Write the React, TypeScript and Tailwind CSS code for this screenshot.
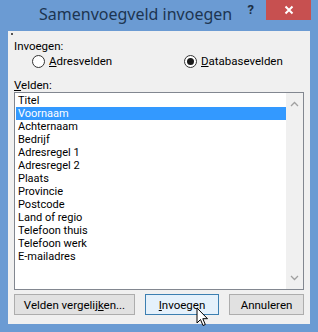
import React from 'react';

const fields = [
  'Titel',
  'Voornaam',
  'Achternaam',
  'Bedrijf',
  'Adresregel 1',
  'Adresregel 2',
  'Plaats',
  'Provincie',
  'Postcode',
  'Land of regio',
  'Telefoon thuis',
  'Telefoon werk',
  'E-mailadres',
];

function Radio({ checked }: { checked?: boolean }) {
  return (
    <span className="w-[13px] h-[13px] rounded-full border border-[#333] bg-white flex items-center justify-center">
      {checked && <span className="w-[7px] h-[7px] rounded-full bg-[#1a1a1a]" />}
    </span>
  );
}

export default function App() {
  return (
    <div
      className="relative w-[318px] h-[332px] bg-[#6b9bd3] flex flex-col text-[#000] overflow-hidden"
      style={{ fontFamily: 'Roboto, "Noto Sans", sans-serif' }}
    >
      {/* title bar */}
      <div className="h-[31px] flex items-start shrink-0">
        <span
          className="ml-[39px] mt-[4px] text-[16px] leading-[20px] text-[#1d3551]"
          style={{ fontFamily: '"Noto Sans", sans-serif' }}
        >
          Samenvoegveld invoegen
        </span>
        <span className="ml-auto mt-[1px] text-[13px] leading-[18px] font-bold text-[#1d2f44]">?</span>
        <div className="ml-[12px] mr-[7px] w-[45px] h-[20px] bg-[#c75050] flex items-center justify-center">
          <svg width="10" height="10" viewBox="0 0 10 10">
            <path d="M1.5 1.5 L8.5 8.5 M8.5 1.5 L1.5 8.5" stroke="#fff" strokeWidth="2" />
          </svg>
        </div>
      </div>

      {/* client area */}
      <div className="mx-[8px] mb-[8px] flex-1 bg-[#f0f0f0] flex flex-col px-[6px] text-[11.5px]">
        <div className="h-[2px] w-[2px] bg-[#555] mt-[2px] -ml-[3px]" />
        <div className="mt-[4px] leading-[15px]">Invoegen:</div>
        <div className="flex items-center h-[15px]">
          <div className="ml-[18px] flex items-center gap-[4px] w-[152px]">
            <Radio />
            <span className="leading-[15px]"><u>A</u>dresvelden</span>
          </div>
          <div className="flex items-center gap-[4px]">
            <Radio checked />
            <span className="leading-[15px]"><u>D</u>atabasevelden</span>
          </div>
        </div>
        <div className="mt-[9px] leading-[14px]"><u>V</u>elden:</div>

        {/* listbox */}
        <div className="h-[198px] border border-[#828790] bg-white flex">
          <div className="flex-1 pt-[1px] pl-[1px] text-[11px]">
            {fields.map((f) => (
              <div
                key={f}
                className={
                  'h-[13px] leading-[13px] pl-[2px] ' +
                  (f === 'Voornaam' ? 'bg-[#3399ff] text-white' : '')
                }
              >
                {f}
              </div>
            ))}
          </div>
          <div className="w-[17px] bg-[#f0f0f0] flex flex-col items-center justify-between py-[8px]">
            <svg width="9" height="6" viewBox="0 0 9 6">
              <path d="M1 5 L4.5 1.5 L8 5" stroke="#a0a0a0" strokeWidth="1.3" fill="none" />
            </svg>
            <svg width="9" height="6" viewBox="0 0 9 6">
              <path d="M1 1 L4.5 4.5 L8 1" stroke="#a0a0a0" strokeWidth="1.3" fill="none" />
            </svg>
          </div>
        </div>

        {/* buttons */}
        <div className="mt-[4px] flex items-center">
          <button className="w-[121px] h-[21px] border border-[#adadad] bg-[#e1e1e1] leading-[18px]">
            Velden vergelij<u>k</u>en...
          </button>
          <button className="ml-[10px] w-[74px] h-[21px] border border-[#3c7fb1] bg-[#e5f1fb] leading-[18px]">
            <u>I</u>nvoegen
          </button>
          <button className="ml-[10px] w-[75px] h-[21px] border border-[#adadad] bg-[#e1e1e1] leading-[18px]">
            Annuleren
          </button>
        </div>
      </div>

      {/* mouse cursor */}
      <svg className="absolute left-[196px] top-[307px]" width="13" height="20" viewBox="0 0 13 20">
        <path d="M1 1 L1 16 L4.5 12.5 L7 18.5 L9.3 17.5 L6.8 11.7 L11.5 11.7 Z" fill="#fff" stroke="#000" strokeWidth="1" strokeLinejoin="round" />
      </svg>
    </div>
  );
}
